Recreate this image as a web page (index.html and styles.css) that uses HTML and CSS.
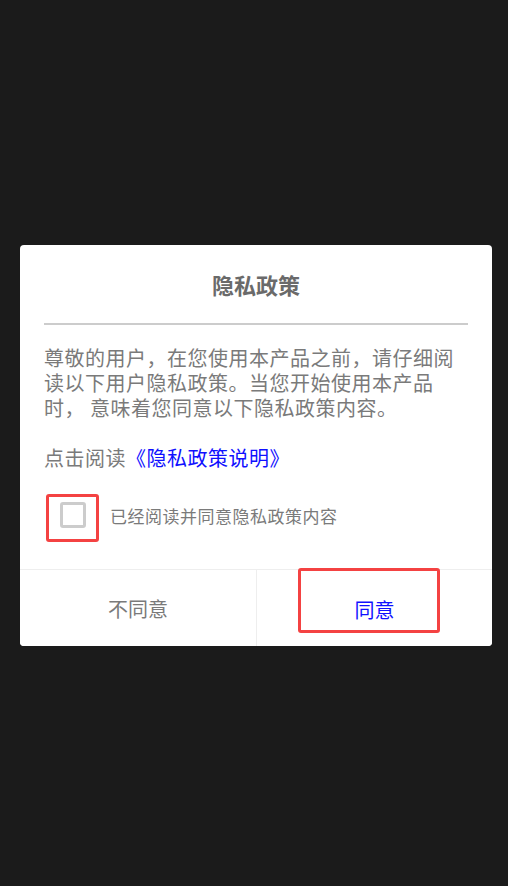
FILE: index.html
```html
<!DOCTYPE html>
<html lang="zh-CN">
<head>
  <meta charset="UTF-8" />
  <meta name="viewport" content="width=device-width, initial-scale=1" />
  <title>隐私政策</title>
  <link rel="stylesheet" href="styles.css">
</head>
<body>

<div class="dialog">
  <h2 class="title">隐私政策</h2>
  <div class="divider"></div>

  <div class="content">
    <p class="desc">尊敬的用户，在您使用本产品之前，请仔细阅读以下用户隐私政策。当您开始使用本产品时， 意味着您同意以下隐私政策内容。</p>
    <p class="read">点击阅读<a href="#" class="link">《隐私政策说明》</a></p>

    <label class="agree">
      <span class="mark"><span class="checkbox"></span></span>
      <span class="agree-text">已经阅读并同意隐私政策内容</span>
    </label>
  </div>

  <div class="buttons">
    <button class="btn btn-cancel">不同意</button>
    <button class="btn btn-ok"><span class="mark-ok"></span>同意</button>
  </div>
</div>

</body>
</html>
```

FILE: styles.css
```css
* {
  box-sizing: border-box;
}

body {
  margin: 0;
  background: #1b1b1b;
  font-family: "Noto Sans CJK SC", "Noto Sans", sans-serif;
}

.dialog {
  width: 472px;
  margin: 245px 0 0 20px;
  background: #fff;
  border-radius: 4px;
  overflow: hidden;
}

.title {
  margin: 0;
  padding-top: 22px;
  margin-bottom: 22px;
  font-size: 22px;
  line-height: 34px;
  font-weight: bold;
  color: #6a6a6a;
  text-align: center;
}

.divider {
  height: 2px;
  margin: 0 24px;
  background: #ccc;
}

.content {
  padding: 0 24px;
}

.desc {
  margin: 20px 0 0;
  font-size: 20px;
  line-height: 25px;
  letter-spacing: 0.5px;
  color: #7a7a7a;
}

.read {
  margin: 25px 0 0;
  font-size: 20px;
  line-height: 25px;
  letter-spacing: 0.5px;
  color: #7a7a7a;
}

.link {
  color: #1010ff;
  text-decoration: none;
}

.agree {
  display: flex;
  align-items: center;
  margin-top: 24px;
}

.mark {
  display: block;
  width: 53px;
  height: 48px;
  margin-left: 2px;
  padding: 5px 0 0 11px;
  border: 3px solid #f44242;
  border-radius: 3px;
}

.checkbox {
  display: block;
  width: 26px;
  height: 26px;
  border: 3px solid #ccc;
  border-radius: 3px;
}

.agree-text {
  margin: 0 0 6px 11px;
  font-size: 17px;
  letter-spacing: 0.5px;
  color: #7a7a7a;
}

.buttons {
  display: flex;
  margin-top: 27px;
  border-top: 1px solid #eee;
}

.btn {
  position: relative;
  height: 76px;
  border: none;
  background: #fff;
  font-family: inherit;
  font-size: 20px;
  cursor: pointer;
}

.btn-cancel {
  width: 237px;
  border-right: 1px solid #eee;
  color: #7a7a7a;
}

.btn-ok {
  flex: 1;
  color: #1010ff;
  padding-top: 3px;
}

.mark-ok {
  position: absolute;
  left: 41px;
  top: -2px;
  width: 142px;
  height: 65px;
  border: 3px solid #f44242;
  border-radius: 3px;
}
```
